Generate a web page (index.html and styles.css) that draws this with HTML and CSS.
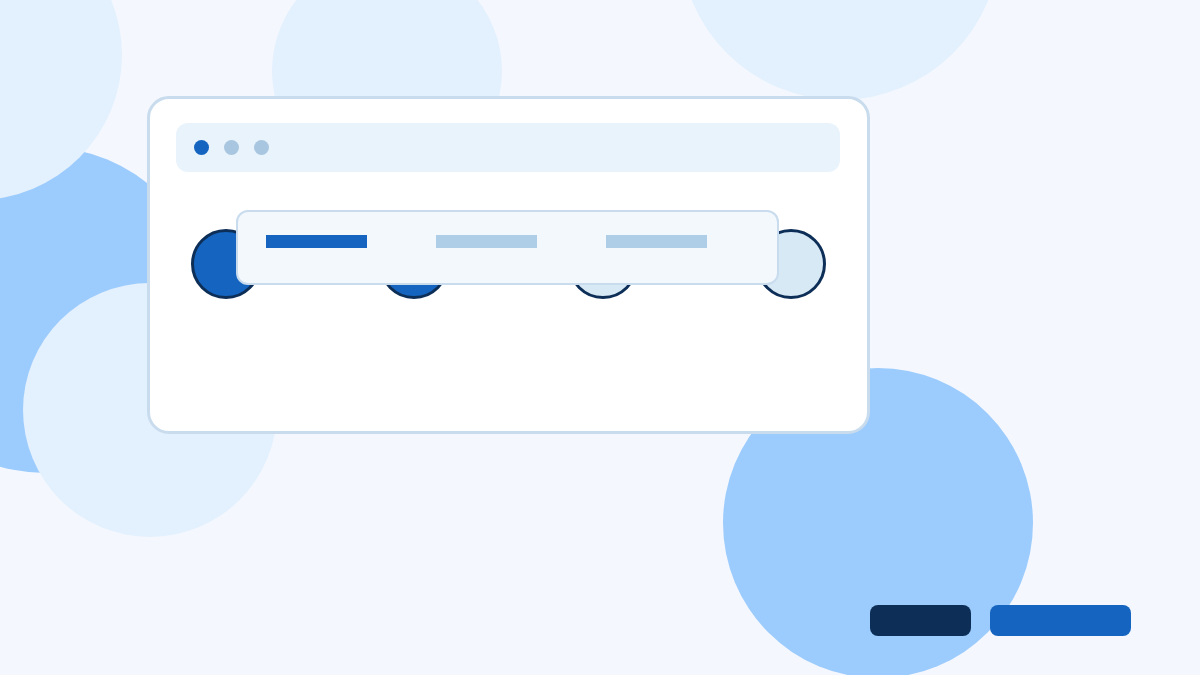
FILE: index.html
```html
<!DOCTYPE html>
<html>
<head>
<meta charset="utf-8">
<link rel="stylesheet" href="styles.css">
</head>
<body>
<div class="stage">
  <div class="bg">
    <span class="blob blue b2"></span>
    <span class="blob light b1"></span>
    <span class="blob light b3"></span>
    <span class="blob light b4"></span>
    <span class="blob light b5"></span>
    <span class="blob blue b6"></span>
  </div>
  <main class="content">
    <section class="card">
      <div class="titlebar">
        <span class="dot active"></span>
        <span class="dot"></span>
        <span class="dot"></span>
      </div>
      <div class="steps">
        <span class="step done"></span>
        <span class="step done"></span>
        <span class="step"></span>
        <span class="step"></span>
      </div>
      <div class="tabs">
        <span class="tab active"></span>
        <span class="tab"></span>
        <span class="tab"></span>
      </div>
    </section>
    <div class="actions">
      <span class="btn dark"></span>
      <span class="btn primary"></span>
    </div>
  </main>
</div>
</body>
</html>
```
FILE: styles.css
```css
html, body {
  margin: 0;
  padding: 0;
}
body {
  background: #f4f8fe;
  font-family: "Liberation Sans", Arial, sans-serif;
}
.stage {
  position: relative;
  width: 1200px;
  height: 675px;
  overflow: hidden;
  background: #f4f8fe;
}
.bg {
  position: absolute;
  inset: 0;
}
.blob {
  position: absolute;
  border-radius: 50%;
}
.blob.light { background: #e3f0fd; }
.blob.blue { background: #9ccbfd; }
.b1 { left: -168px; top: -90px; width: 290px; height: 290px; }
.b2 { left: -118px; top: 147px; width: 326px; height: 326px; }
.b3 { left: 23px; top: 283px; width: 254px; height: 254px; }
.b4 { left: 272px; top: -44px; width: 230px; height: 230px; }
.b5 { left: 680px; top: -220px; width: 320px; height: 320px; }
.b6 { left: 723px; top: 368px; width: 310px; height: 310px; }

.content {
  position: relative;
  padding: 96px 0 0 147px;
}
.card {
  position: relative;
  box-sizing: border-box;
  width: 723px;
  height: 338px;
  background: #ffffff;
  border: 3px solid #c8dcee;
  border-radius: 22px;
  padding: 24px 27px 0 26px;
}
.titlebar {
  height: 49px;
  background: #e8f3fc;
  border-radius: 12px;
  display: flex;
  align-items: center;
  gap: 15px;
  padding-left: 18px;
}
.dot {
  width: 15px;
  height: 15px;
  border-radius: 50%;
  background: #a9c6e0;
}
.dot.active { background: #1565c0; }

.steps {
  display: flex;
  justify-content: space-between;
  margin: 57px 14px 0 15px;
}
.step {
  box-sizing: border-box;
  width: 70px;
  height: 70px;
  border-radius: 50%;
  border: 3px solid #0d2f57;
  background: #d8e9f6;
}
.step.done { background: #1565c0; }

.tabs {
  position: absolute;
  left: 86px;
  top: 111px;
  box-sizing: border-box;
  width: 543px;
  height: 75px;
  background: #f3f8fd;
  border: 2px solid #c8dcee;
  border-radius: 12px;
  display: flex;
  gap: 69px;
  padding: 23px 0 0 28px;
}
.tab {
  width: 101px;
  height: 13px;
  background: #aecde6;
}
.tab.active { background: #1565c0; }

.actions {
  display: flex;
  justify-content: flex-end;
  gap: 19px;
  margin-top: 171px;
  padding-right: 69px;
}
.btn {
  height: 31px;
  border-radius: 8px;
}
.btn.dark { width: 101px; background: #0d2f57; }
.btn.primary { width: 141px; background: #1565c0; }
```
